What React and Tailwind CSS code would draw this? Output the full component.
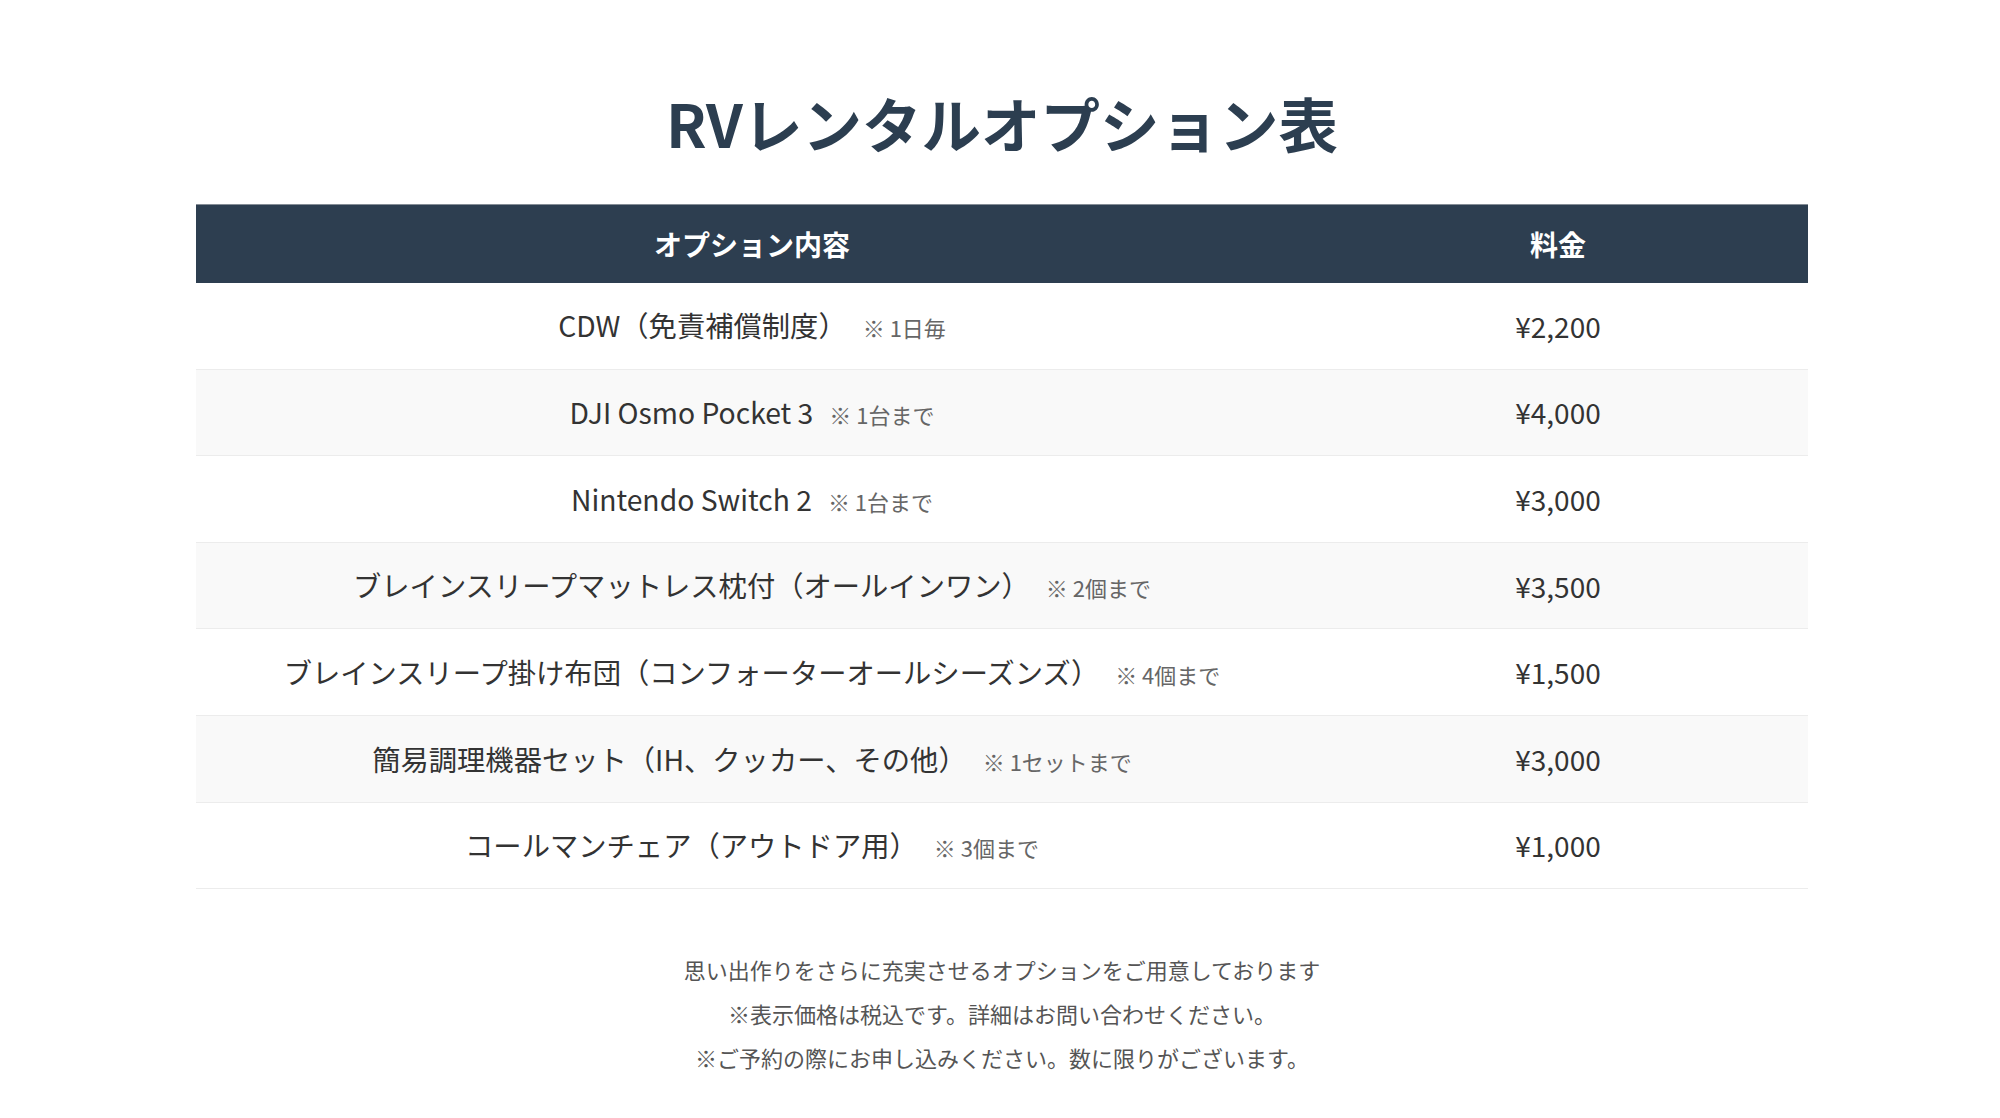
const options = [
  { name: 'CDW（免責補償制度）', note: '※ 1日毎', price: '¥2,200' },
  { name: 'DJI Osmo Pocket 3', note: '※ 1台まで', price: '¥4,000' },
  { name: 'Nintendo Switch 2', note: '※ 1台まで', price: '¥3,000' },
  { name: 'ブレインスリープマットレス枕付（オールインワン）', note: '※ 2個まで', price: '¥3,500' },
  { name: 'ブレインスリープ掛け布団（コンフォーターオールシーズンズ）', note: '※ 4個まで', price: '¥1,500' },
  { name: '簡易調理機器セット（IH、クッカー、その他）', note: '※ 1セットまで', price: '¥3,000' },
  { name: 'コールマンチェア（アウトドア用）', note: '※ 3個まで', price: '¥1,000' },
]

export default function App() {
  return (
    <main className="bg-white min-h-screen font-['Noto_Sans_CJK_JP','Noto_Sans',sans-serif] text-[#333]">
      <section className="flex justify-center pl-1 pt-[77px] pb-[40px]">
        <div className="w-[1612px]">
          <h1 className="text-center text-[59.5px] leading-[90px] font-bold text-[#2c3e50] mb-[37px]">
            RVレンタルオプション表
          </h1>

          <table className="w-full table-fixed border-collapse">
            <thead>
              <tr className="bg-[#2d3e50] text-white border-t border-[#858d96]">
                <th className="h-[78px] text-[28px] font-bold text-center">オプション内容</th>
                <th className="w-[500px] h-[78px] text-[28px] font-bold text-center">料金</th>
              </tr>
            </thead>
            <tbody>
              {options.map((option, i) => (
                <tr key={option.name} className={`border-b border-[#ececec] ${i % 2 === 1 ? 'bg-[#f9f9f9]' : 'bg-white'}`}>
                  <td className="h-[86.6px] text-center text-[28.3px]">
                    {option.name}
                    <span className="ml-4 text-[22px] text-[#666]">{option.note}</span>
                  </td>
                  <td className="h-[86.6px] text-center text-[28px]">{option.price}</td>
                </tr>
              ))}
            </tbody>
          </table>

          <div className="mt-[58px] text-center text-[22px] leading-[44px] text-[#555]">
            <p>思い出作りをさらに充実させるオプションをご用意しております</p>
            <p>※表示価格は税込です。詳細はお問い合わせください。</p>
            <p>※ご予約の際にお申し込みください。数に限りがございます。</p>
          </div>
        </div>
      </section>
    </main>
  )
}
